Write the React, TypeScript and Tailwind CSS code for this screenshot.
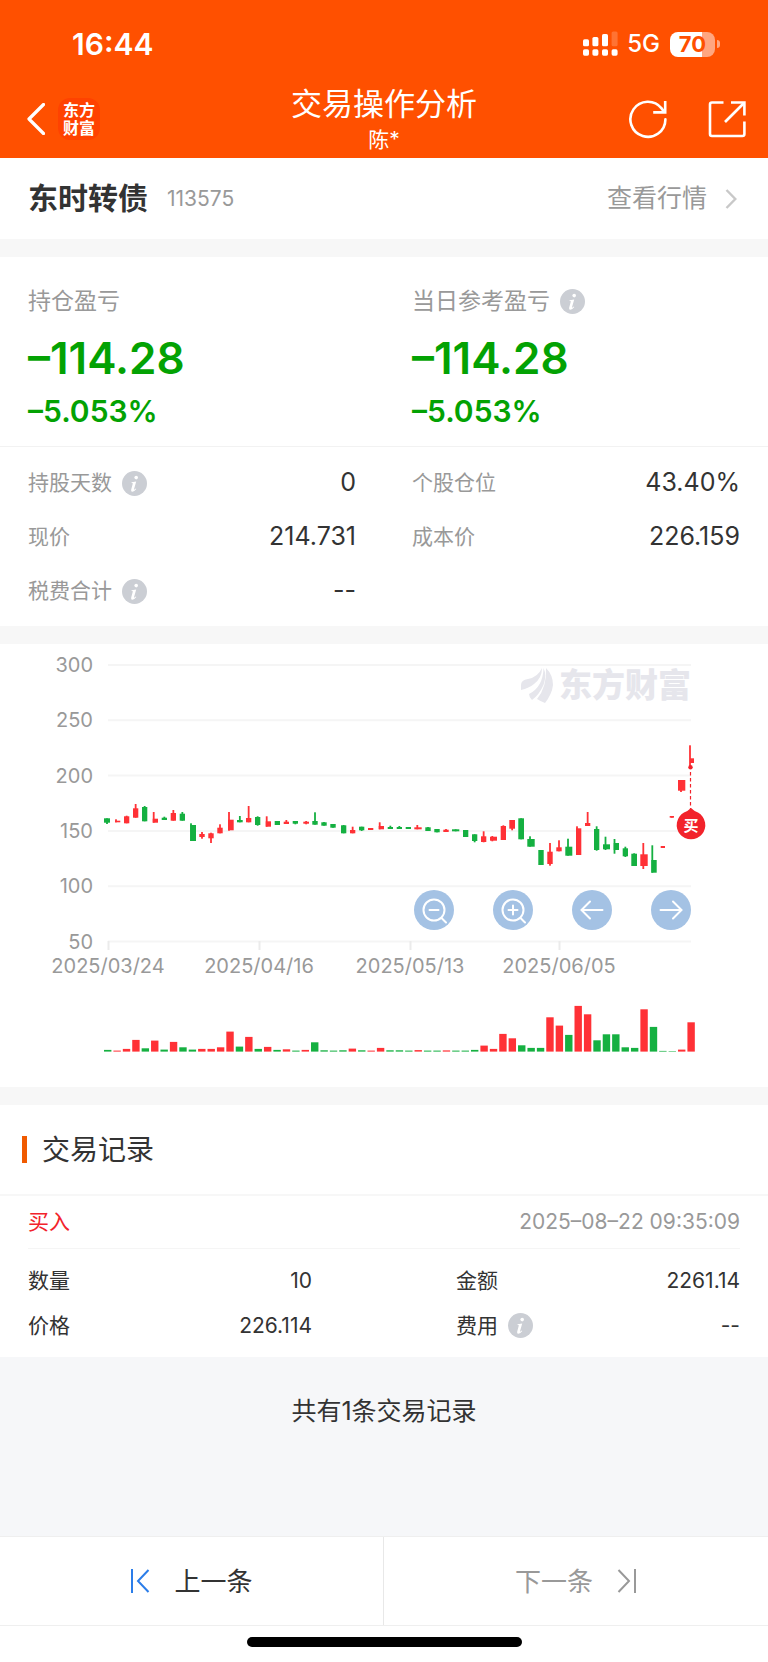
import React from "react";

const UP = "#ff3136";
const DOWN = "#15b041";

type Candle = {
  up: boolean;
  left: number;
  right: number;
  top: number;
  bottom: number;
  high: number;
  low: number;
  wick: number;
  volume: number;
};

// dir, left, right, top, bottom, high, low, volume, wick (only when off centre)
type Row = [string, number, number, number, number, number, number, number, number?];

const rows: Row[] = [
  ["d", 104, 110, 174.3, 178.7, 174.3, 180, 1.7],
  ["u", 115, 120.3, 176.7, 178.3, 175.3, 178.3, 1, 116],
  ["u", 124, 129.3, 172.3, 179.3, 171.7, 179.3, 2.7],
  ["u", 133, 138.3, 164.3, 173.7, 160, 173.7, 11.7],
  ["d", 142, 147.3, 163, 177.3, 162, 177.3, 3.3],
  ["u", 152.7, 158, 174.7, 178.7, 168, 178.7, 11, 153.7],
  ["d", 161.7, 167, 173.7, 176, 172.7, 176, 2],
  ["u", 170.7, 176, 169, 176.7, 166, 176.7, 9.7],
  ["d", 179.7, 185, 169.7, 176.7, 168, 176.7, 4.3],
  ["d", 190.3, 196, 181, 197, 179.3, 197, 2, 191],
  ["u", 199.3, 204.7, 190, 193, 188, 194.7, 2.7],
  ["u", 208.3, 213.7, 189.3, 194.3, 188.7, 199, 2.7],
  ["u", 217.3, 222.7, 183.7, 189.3, 180.3, 189.3, 4.3],
  ["u", 228, 233.7, 175.7, 186.3, 168, 186.7, 20, 229],
  ["d", 237, 242.7, 176, 178.3, 172, 178.3, 5],
  ["u", 246, 251.3, 174, 178.3, 162, 178.3, 14.7],
  ["d", 255, 260.3, 173, 181, 172.3, 181.7, 2.7],
  ["u", 265.7, 271, 177.3, 182.7, 172.3, 182.7, 4.7, 266.7],
  ["d", 274.7, 280, 177, 181, 177, 181, 1.7],
  ["u", 283.7, 289, 177.7, 180, 176, 180, 2.3],
  ["d", 292.7, 298, 177, 179.7, 177, 180.3, 1],
  ["u", 303.3, 309, 177.7, 179.7, 177, 180.3, 1.7],
  ["d", 312.3, 317.7, 177, 180.7, 168.3, 180.7, 9.3],
  ["d", 321.3, 326.7, 178.3, 181.7, 178, 181.7, 1.3],
  ["d", 330.3, 335.7, 180, 183.7, 180, 183.7, 1],
  ["d", 341, 346.3, 181.3, 189.3, 181, 189.3, 1.3],
  ["u", 350, 355.3, 186, 189.3, 182.7, 189.3, 3],
  ["d", 359, 364.3, 182.7, 186.3, 182.7, 187, 1.3],
  ["u", 368, 373.3, 184, 186, 184, 186, 1],
  ["u", 378.7, 384, 182, 185.3, 178.3, 185.3, 3.7, 379.7],
  ["d", 387.7, 393, 183, 185, 181.7, 185, 1.3],
  ["d", 396.7, 402, 183, 185, 182, 185, 1.3],
  ["d", 405.7, 411, 183, 185, 183, 185, 1],
  ["u", 414.3, 421.7, 183.3, 185.3, 181, 185.3, 1.5, 417.3],
  ["d", 425.3, 430.7, 183.3, 187, 183, 187, 1],
  ["d", 434.3, 439.7, 185, 188.3, 185, 188.3, 1],
  ["u", 443.3, 448.7, 185.7, 188, 185, 188, 1.2],
  ["d", 452, 459.3, 185.3, 187.3, 185.3, 187.3, 1],
  ["d", 463, 468.3, 186, 193, 186, 193, 1],
  ["d", 472, 477.3, 190.3, 197, 190.3, 198.3, 1.7],
  ["u", 481, 486.3, 192.3, 198, 187.3, 198.3, 6],
  ["u", 490, 497, 192.7, 196.7, 192, 197.3, 2.7, 492.3],
  ["u", 500.7, 506, 182, 196, 181.3, 196, 17.7],
  ["u", 509.3, 515, 176, 184.7, 176, 186.3, 13.3],
  ["d", 518.3, 524, 174.3, 195.3, 174.3, 195.3, 6.3],
  ["d", 527.3, 534.7, 195, 202.7, 192.3, 202.7, 3.7, 530],
  ["d", 538.3, 543.7, 206, 221, 206, 221, 3.7],
  ["u", 547.3, 552.7, 207.7, 220, 199, 221.7, 34.3],
  ["u", 556.3, 561.7, 203.3, 207.3, 196.3, 207.3, 26],
  ["d", 565.3, 572.3, 202.7, 211.7, 194.7, 211.7, 16.7, 568],
  ["u", 576, 581.3, 184.3, 211, 182.3, 211, 45.7, 577],
  ["u", 585, 590.3, 179, 182, 168, 182, 37.3],
  ["d", 594, 599.3, 185, 206, 182.3, 206.7, 11.3],
  ["d", 603, 610, 200.3, 205.3, 192.7, 206, 17.3, 605.5],
  ["d", 613.7, 619, 199, 206, 195, 209.7, 17.3, 614.5],
  ["d", 622.7, 628, 204.3, 212.3, 202.7, 213, 4.3],
  ["d", 631.3, 637, 209.7, 222, 209.3, 222, 3.7],
  ["u", 640.3, 647.7, 210.3, 222, 199, 225, 42.3, 643.3],
  ["d", 651.3, 656.7, 216, 228.7, 201.3, 228.7, 24.7, 652.3],
  ["u", 660.7, 665, 202, 204, 202, 204, 0.7],
  ["u", 669.7, 674, 172, 173.7, 172, 173.7, 0.5],
  ["u", 678, 685.3, 136, 146.7, 136, 148, 2, 681],
  ["u", 690, 694, 114.3, 119, 101.3, 123, 29.3, 690],
];

const candles: Candle[] = rows.map((r) => ({
  up: r[0] === "u",
  left: r[1],
  right: r[2],
  top: r[3],
  bottom: r[4],
  high: r[5],
  low: r[6],
  volume: r[7],
  wick: r[8] ?? (r[1] + r[2]) / 2,
}));

const priceTicks = [300, 250, 200, 150, 100, 50];
const dateTicks = [
  { x: 108, label: "2025/03/24" },
  { x: 259, label: "2025/04/16" },
  { x: 410, label: "2025/05/13" },
  { x: 559, label: "2025/06/05" },
];

function InfoButton({ label }: { label: string }) {
  return (
    <button
      type="button"
      aria-label={`${label}说明`}
      className="flex h-[25px] w-[25px] shrink-0 cursor-pointer rounded-full bg-[#cbced4]"
    >
      <svg viewBox="0 0 25 25" className="h-full w-full">
        <circle cx="14.2" cy="6.6" r="1.8" fill="#fff" />
        <path
          d="M9.6 11.2 L14.2 10.4 L12 18.3 Q11.8 19.4 13.8 17.6 L14.3 18.1 Q12.2 20.8 10.3 20.7 Q8.6 20.5 9.2 18.4 L10.9 12.2 L9.5 11.9 Z"
          fill="#fff"
        />
      </svg>
    </button>
  );
}

function StatusBar() {
  return (
    <div className="flex h-[82px] items-center justify-between pt-[6px] pr-[48px] pl-[72px]">
      <span className="text-[30px] leading-9 font-semibold">16:44</span>
      <div className="flex items-center">
        <svg width="36" height="26" viewBox="0 0 36 26" fill="#fff">
          <rect x="0" y="8.3" width="6" height="7" rx="1.6" />
          <rect x="9.4" y="6" width="6" height="9.3" rx="1.6" />
          <rect x="19" y="3" width="6" height="12.3" rx="1.6" />
          <rect x="28.6" y="0.5" width="6" height="14.8" rx="1.6" opacity="0.2" />
          <rect x="0" y="18.3" width="6" height="6.4" rx="1.6" />
          <rect x="9.4" y="18.3" width="6" height="6.4" rx="1.6" />
          <rect x="19" y="18.3" width="6" height="6.4" rx="1.6" />
          <rect x="28.6" y="18.3" width="6" height="6.4" rx="1.6" />
        </svg>
        <span className="ml-2 text-[24px] leading-8 font-medium">5G</span>
        <div className="ml-[10px] flex items-center">
          <div className="flex h-[25px] w-[45px] items-center justify-center rounded-lg bg-linear-to-r from-white from-72% to-[#ffa680] to-72%">
            <span className="text-[22px] leading-6 font-bold text-[#ff5000]">70</span>
          </div>
          <div className="ml-[2px] h-[8px] w-[3px] rounded-r-full bg-[#ffa680]"></div>
        </div>
      </div>
    </div>
  );
}

function Header() {
  return (
    <header className="bg-[#ff5000] text-white">
      <StatusBar />
      <div className="grid h-[76px] grid-cols-[1fr_auto_1fr] items-center pb-[2px]">
        <div className="flex items-center gap-[13px] pl-[26px]">
          <button type="button" aria-label="返回" className="cursor-pointer">
            <svg width="19" height="32" viewBox="0 0 19 32" fill="none" stroke="#fff" strokeWidth="3.2">
              <path d="M17.5 1.5 L3 16 L17.5 30.5" strokeLinecap="round" strokeLinejoin="round" />
            </svg>
          </button>
          <div className="flex h-[42px] w-[42px] flex-col items-center justify-center rounded-xl bg-[#ff4200] text-[16px] leading-[18px] font-bold">
            <span>东方</span>
            <span>财富</span>
          </div>
        </div>
        <div className="pt-[2px] text-center">
          <h1 className="text-[31px] leading-10">交易操作分析</h1>
          <p className="text-[21px] leading-8">陈*</p>
        </div>
        <div className="flex items-center justify-end gap-[40px] pr-[22px]">
          <button type="button" aria-label="刷新" className="cursor-pointer">
            <svg width="40" height="40" viewBox="0 0 40 40" fill="none" stroke="#fff" strokeWidth="2.6">
              <path d="M37.4 20.4 A17.5 17.5 0 1 1 33.6 9.4 L36 12.6" strokeLinecap="round" />
              <path d="M37.2 2 V13.4 H25.2" />
            </svg>
          </button>
          <button type="button" aria-label="分享" className="cursor-pointer">
            <svg width="38" height="38" viewBox="0 0 38 38" fill="none" stroke="#fff" strokeWidth="2.6">
              <path d="M15.5 2.5 H4 Q2 2.5 2 4.5 V34 Q2 36 4 36 H34.4 Q36.4 36 36.4 34 V21.5" />
              <path d="M23 2.5 H36.4 V15.6" />
              <path d="M36 3 L17 22" />
            </svg>
          </button>
        </div>
      </div>
    </header>
  );
}

function Profit({ label, info }: { label: string; info?: boolean }) {
  return (
    <div>
      <div className="flex items-center gap-[10px] text-[23px] leading-7 text-[#999]">
        {label}
        {info && <InfoButton label={label} />}
      </div>
      <p className="mt-[21px] text-[44px] leading-[44px] font-semibold text-[#03a203]">–114.28</p>
      <p className="mt-[15px] text-[30px] leading-8 font-semibold text-[#03a203]">–5.053%</p>
    </div>
  );
}

function Metric({ label, value, info }: { label: string; value: string; info?: boolean }) {
  return (
    <div className="flex h-[54px] items-center justify-between">
      <div className="flex items-center gap-[10px] text-[21px] text-[#999]">
        {label}
        {info && <InfoButton label={label} />}
      </div>
      <span className="text-[25px] text-[#333]">{value}</span>
    </div>
  );
}

function Detail({ label, value, info }: { label: string; value: string; info?: boolean }) {
  return (
    <div className="flex h-[45px] items-center justify-between text-[21px] text-[#333]">
      <div className="flex items-center gap-[10px]">
        {label}
        {info && <InfoButton label={label} />}
      </div>
      <span>{value}</span>
    </div>
  );
}

function ChartButton({ label, children }: { label: string; children: React.ReactNode }) {
  return (
    <button
      type="button"
      aria-label={label}
      className="h-[40px] w-[40px] cursor-pointer rounded-full bg-[#a4c2e4]"
    >
      <svg
        viewBox="0 0 40 40"
        fill="none"
        stroke="#fff"
        strokeWidth="2"
        strokeLinecap="round"
        className="h-full w-full"
      >
        {children}
      </svg>
    </button>
  );
}

function Chart() {
  return (
    <section className="relative bg-white">
      <svg viewBox="0 0 768 443" className="block w-full" fontFamily="Inter">
        {priceTicks.map((tick, i) => (
          <g key={tick}>
            <line x1="108" x2="691" y1={21 + i * 55.3} y2={21 + i * 55.3} stroke="#f5f5f5" strokeWidth="2" />
            <text x="93" y={28 + i * 55.3} textAnchor="end" fontSize="20" fill="#999">
              {tick}
            </text>
          </g>
        ))}
        {dateTicks.map((tick) => (
          <g key={tick.label}>
            <line x1={tick.x + 0.5} x2={tick.x + 0.5} y1="297" y2="306" stroke="#ebebeb" strokeWidth="2" />
            <text x={tick.x} y="329" textAnchor="middle" fontSize="20" fill="#999">
              {tick.label}
            </text>
          </g>
        ))}

        {/* brand watermark */}
        <g fill="#e6e6ec">
          <path d="M521 41 Q521 36 528 35 Q538 33 542 24 Q542 34 534 40 Q529 44 521 46 Z" />
          <path d="M529 50 Q543 43 543.5 24 Q547 31 543.5 41 Q539 51 532 56 Q529 53 529 50 Z" />
          <path d="M537 55 Q547 43 546 24 Q553 31 553 41 Q552 50 545 59 Q540 57 537 55 Z" />
          <text x="559" y="53" fontSize="33" fontWeight="900" fontFamily="Noto Sans CJK SC, sans-serif">
            东方财富
          </text>
        </g>

        {candles.map((c) => (
          <g key={c.left} fill={c.up ? UP : DOWN}>
            <rect x={c.left} y={c.top} width={c.right - c.left} height={c.bottom - c.top} />
            <rect x={c.wick - 0.9} y={c.high} width="1.8" height={c.low - c.high} />
          </g>
        ))}
        {candles.map((c, i) => (
          <rect
            key={i}
            x={104 + i * 9.41}
            y={407.6 - c.volume}
            width="7.4"
            height={c.volume}
            fill={c.up && c.volume >= 1 ? UP : DOWN}
          />
        ))}

        {/* buy marker */}
        <circle cx="690.5" cy="123.2" r="2.2" fill="#f2232b" />
        <line x1="690.5" x2="690.5" y1="128" y2="165" stroke="#f2232b" strokeWidth="1.2" strokeDasharray="3.4 2.6" />
        <path d="M691 164 Q694 167 698 168.6 A14.3 14.3 0 1 1 684 168.6 Q688 167 691 164 Z" fill="#f2232b" />
        <text
          x="691"
          y="187"
          textAnchor="middle"
          fontSize="15"
          fontWeight="700"
          fontFamily="Noto Sans CJK SC, sans-serif"
          fill="#fff"
        >
          买
        </text>
      </svg>

      <div className="absolute top-[246px] right-[10%] flex gap-[39px]">
        <ChartButton label="缩小">
          <circle cx="20" cy="20" r="10.5" />
          <path d="M15.5 20 H24.5 M27.5 28 L32 32.5" />
        </ChartButton>
        <ChartButton label="放大">
          <circle cx="20" cy="20" r="10.5" />
          <path d="M15.5 20 H24.5 M20 15.5 V24.5 M27.5 28 L32 32.5" />
        </ChartButton>
        <ChartButton label="左移">
          <path d="M30.5 20 H10 M18 11.5 L9.5 20 L18 28.5" />
        </ChartButton>
        <ChartButton label="右移">
          <path d="M9.5 20 H30 M22 11.5 L30.5 20 L22 28.5" />
        </ChartButton>
      </div>
    </section>
  );
}

export default function App() {
  return (
    <div className="flex min-h-screen flex-col bg-[#f7f7f7] font-['Inter','Noto_Sans_CJK_SC',sans-serif]">
      <Header />

      <section className="flex h-[81px] items-center justify-between bg-white pr-[31px] pl-7">
        <div className="flex items-center gap-[19px]">
          <h2 className="text-[30px] font-bold text-[#333]">东时转债</h2>
          <span className="text-[21px] text-[#999]">113575</span>
        </div>
        <a href="#quote" className="flex items-center gap-[18px] text-[25px] text-[#999]">
          查看行情
          <svg width="12" height="20" viewBox="0 0 12 20" fill="none" stroke="#c8c8c8" strokeWidth="2.4">
            <path d="M1.5 1 L10.3 10 L1.5 19" />
          </svg>
        </a>
      </section>

      <section className="mt-[18px] bg-white">
        <div className="grid grid-cols-2 gap-[56px] border-b border-[#f2f2f2] px-7 pt-[30px] pb-[19px]">
          <Profit label="持仓盈亏" />
          <Profit label="当日参考盈亏" info />
        </div>
        <div className="grid grid-cols-2 gap-x-[56px] px-7 pt-[9px] pb-2">
          <Metric label="持股天数" value="0" info />
          <Metric label="个股仓位" value="43.40%" />
          <Metric label="现价" value="214.731" />
          <Metric label="成本价" value="226.159" />
          <Metric label="税费合计" value="--" info />
        </div>
      </section>

      <div className="mt-[18px]">
        <Chart />
      </div>

      <section className="mt-[18px] bg-white">
        <div className="flex h-[91px] items-center gap-[15px] border-b-2 border-[#f7f7f7] pl-[22px]">
          <div className="h-[27px] w-[5px] bg-[#f05a00]"></div>
          <h2 className="text-[28px] text-[#333]">交易记录</h2>
        </div>
        <div className="px-7 pb-[9px]">
          <div className="flex h-[53px] items-center justify-between border-b border-[#f5f5f5] text-[21px]">
            <span className="text-[#f2232b]">买入</span>
            <time className="text-[#999]">2025–08–22 09:35:09</time>
          </div>
          <div className="grid grid-cols-2 gap-x-[144px] pt-[9px]">
            <Detail label="数量" value="10" />
            <Detail label="金额" value="2261.14" />
            <Detail label="价格" value="226.114" />
            <Detail label="费用" value="--" info />
          </div>
        </div>
      </section>

      <div className="flex-1 bg-[#f6f7f9] pt-9 pb-9 text-center text-[25px] leading-9 text-[#333]">
        共有1条交易记录
      </div>

      <footer className="bg-white">
        <div className="grid h-[90px] grid-cols-2 border-y border-[#efefef] text-[26px]">
          <button
            type="button"
            className="flex cursor-pointer items-center justify-center gap-6 border-r border-[#e8e8e8] text-[#333]"
          >
            <svg width="20" height="26" viewBox="0 0 20 26" fill="none" stroke="#2b7de9" strokeWidth="2">
              <path d="M2 1 V25 M18.5 2 L8 13 L18.5 24" />
            </svg>
            上一条
          </button>
          <button type="button" className="flex cursor-pointer items-center justify-center gap-6 text-[#999]">
            下一条
            <svg width="20" height="26" viewBox="0 0 20 26" fill="none" stroke="#999" strokeWidth="2">
              <path d="M18 1 V25 M1.5 2 L12 13 L1.5 24" />
            </svg>
          </button>
        </div>
        <div className="flex h-9 justify-center pt-[11px]">
          <div className="h-[10px] w-[275px] rounded-full bg-black"></div>
        </div>
      </footer>
    </div>
  );
}
